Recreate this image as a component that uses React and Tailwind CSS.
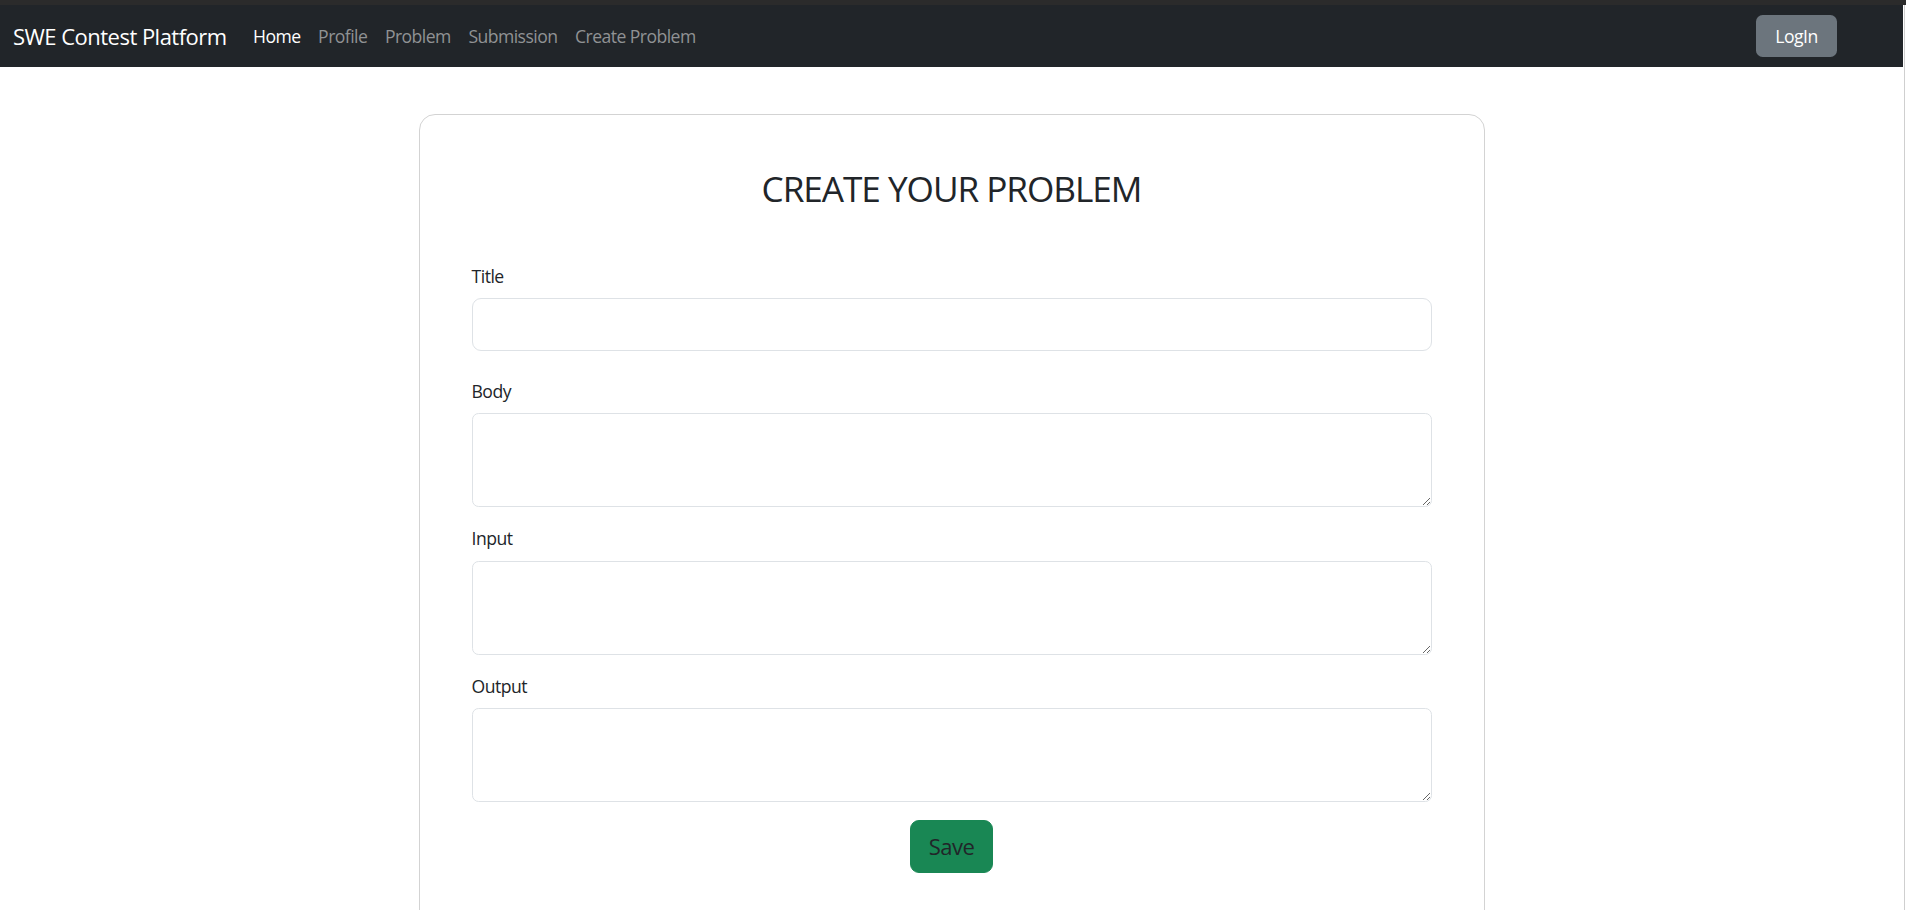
export default function App() {
  const font = { fontFamily: '"Open Sans", "Noto Sans", sans-serif' };
  return (
    <div className="h-screen overflow-hidden bg-white flex flex-col" style={font}>
      <div className="h-[5px] bg-[#2b2b2b] shrink-0" />
      <div className="flex flex-1 min-h-0">
        <div className="flex-1 min-w-0 flex flex-col">
          <nav className="h-[62px] shrink-0 bg-[#212529] flex items-center pl-[13px] pr-[66px]">
            <span className="text-[22px] leading-[33px] text-white mr-[17.6px] tracking-[-0.52px]">SWE Contest Platform</span>
            <ul className="flex items-center text-[17.6px] leading-[26px] tracking-[-0.55px]">
              <li className="px-[8.8px] text-white">Home</li>
              <li className="px-[8.8px] text-[#909294]">Profile</li>
              <li className="px-[8.8px] text-[#909294]">Problem</li>
              <li className="px-[8.8px] text-[#909294]">Submission</li>
              <li className="px-[8.8px] text-[#909294]">Create Problem</li>
            </ul>
            <div className="flex-1" />
            <button className="h-[42px] w-[81px] rounded-[6.6px] bg-[#6c757d] text-white text-[17.6px] tracking-[-0.5px]">LogIn</button>
          </nav>
          <main className="pt-[47px]">
            <div className="w-[1066px] mx-auto border border-[#d3d3d3] rounded-[16px] px-[52px] pt-[52px] pb-[60px]">
              <h2 className="text-center text-[35.2px] leading-[42px] text-[#212529] mb-[54px] tracking-[-1.05px]">CREATE YOUR PROBLEM</h2>
              <div className="mb-[27px]">
                <label className="block text-[17.6px] leading-[26.4px] mb-[8.8px] text-[#212529] tracking-[-0.5px]">Title</label>
                <input type="text" className="block w-full h-[53px] border border-[#dee2e6] rounded-[9px] px-[17px] outline-none" />
              </div>
              {["Body", "Input", "Output"].map((l) => (
                <div key={l} className="mb-[18px]">
                  <label className="block text-[17.6px] leading-[26.4px] mb-[8.8px] text-[#212529] tracking-[-0.5px]">{l}</label>
                  <textarea className="block w-full h-[94px] border border-[#dee2e6] rounded-[6.6px] px-[13px] py-[6.6px] outline-none" />
                </div>
              ))}
              <div className="flex justify-center">
                <button className="h-[53px] px-[17.6px] rounded-[9px] bg-[#198754] border border-[#198754] text-[#212529] text-[22px] tracking-[-0.5px]">Save</button>
              </div>
            </div>
          </main>
        </div>
        <div className="w-[3px] shrink-0 bg-white flex">
          <div className="w-[1px] ml-[1px] bg-[#cfcfcf]" />
        </div>
      </div>
    </div>
  );
}
